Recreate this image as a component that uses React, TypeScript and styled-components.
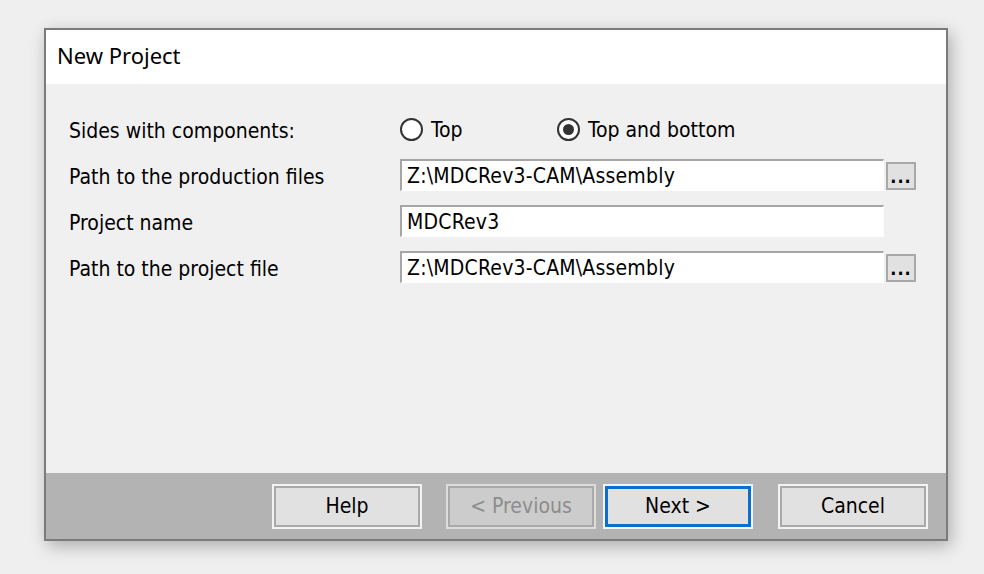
import React from "react";
import styled, { createGlobalStyle } from "styled-components";

const Global = createGlobalStyle`
  html, body { margin: 0; padding: 0; background: #efefef; }
  body { font-family: "DejaVu Sans Condensed", "DejaVu Sans", sans-serif; }
`;

const Page = styled.div`
  width: 984px;
  height: 574px;
  box-sizing: border-box;
  padding: 28px 0 0 44px;
  overflow: hidden;
`;

const Dialog = styled.div`
  width: 904px;
  height: 513px;
  box-sizing: border-box;
  border: 2px solid #7b7b7b;
  background: #f0f0f0;
  display: flex;
  flex-direction: column;
  box-shadow: 3px 5px 16px rgba(0, 0, 0, 0.28);
`;

const TitleBar = styled.div`
  height: 54px;
  flex: none;
  background: #ffffff;
  display: flex;
  align-items: center;
  padding-left: 11px;
  padding-bottom: 5px;
  box-sizing: border-box;
  font-family: "Noto Sans", "Open Sans", sans-serif;
  font-size: 22px;
  color: #000;
`;

const Body = styled.div`
  flex: 1;
  padding: 22px 0 0 23px;
  display: grid;
  grid-template-columns: 331px 484px 2px 30px;
  grid-auto-rows: 46px;
  align-content: start;
  align-items: center;
`;

const Label = styled.div`
  grid-column: 1;
  font-size: 21px;
  color: #000;
  white-space: nowrap;
  padding-top: 3px;
`;

const RadioGroup = styled.div`
  grid-column: 2 / span 3;
  display: flex;
  align-items: center;
`;

const RadioOption = styled.div<{ $width?: number }>`
  display: flex;
  align-items: center;
  gap: 8px;
  width: ${(p) => (p.$width ? `${p.$width}px` : "auto")};
  font-size: 21px;
  color: #000;
  white-space: nowrap;
  padding-top: 2px;
`;

const RadioCircle = styled.span<{ $checked?: boolean }>`
  width: 23px;
  height: 23px;
  box-sizing: border-box;
  border-radius: 50%;
  border: 2px solid #333333;
  background: #ffffff;
  display: flex;
  align-items: center;
  justify-content: center;
  margin-top: -2px;
  &::after {
    content: "";
    display: ${(p) => (p.$checked ? "block" : "none")};
    width: 11px;
    height: 11px;
    border-radius: 50%;
    background: #333333;
  }
`;

const Field = styled.div`
  grid-column: 2;
  height: 32px;
  box-sizing: border-box;
  border-style: solid;
  border-width: 2px 1px 1px 2px;
  border-color: #a6a6a6 #ffffff #ffffff #a6a6a6;
  background: #ffffff;
  padding-left: 5px;
  display: flex;
  align-items: center;
  font-size: 21px;
  color: #000;
  white-space: nowrap;
  letter-spacing: 0.2px;
`;

const BrowseButton = styled.div`
  grid-column: 4;
  width: 30px;
  height: 28px;
  box-sizing: border-box;
  border: 2px solid #a8a8a8;
  background: #e1e1e1;
  display: flex;
  align-items: flex-end;
  justify-content: center;
  font-size: 18px;
  line-height: 1;
  font-weight: bold;
  letter-spacing: 1px;
  color: #000;
  padding-bottom: 2px;
  margin-top: 1px;
`;

const Footer = styled.div`
  height: 66px;
  flex: none;
  background: #b3b3b3;
  display: flex;
  justify-content: flex-end;
  align-items: flex-start;
  padding: 11px 18px 0 0;
  box-sizing: border-box;
`;

const Button = styled.div<{ $space?: number; $variant?: "default" | "disabled" | "focus" }>`
  width: 150px;
  height: 45px;
  box-sizing: border-box;
  margin-left: ${(p) => p.$space ?? 0}px;
  border: 2px solid ${(p) => (p.$variant === "disabled" ? "#dcdcdc" : "#f3f3f3")};
  box-shadow: inset 0 0 0 ${(p) => (p.$variant === "focus" ? "3px #0a6fd1" : "2px #a9a9a9")};
  background: ${(p) => (p.$variant === "disabled" ? "#cccccc" : "#e1e1e1")};
  color: ${(p) => (p.$variant === "disabled" ? "#8c8c8c" : "#000")};
  font-size: 21px;
  display: flex;
  align-items: center;
  justify-content: center;
  padding-bottom: 1px;
  white-space: nowrap;
`;

export default function App() {
  return (
    <Page>
      <Global />
      <Dialog>
        <TitleBar>New Project</TitleBar>
        <Body>
          <Label>Sides with components:</Label>
          <RadioGroup>
            <RadioOption $width={157}>
              <RadioCircle />
              Top
            </RadioOption>
            <RadioOption>
              <RadioCircle $checked />
              Top and bottom
            </RadioOption>
          </RadioGroup>

          <Label>Path to the production files</Label>
          <Field>Z:\MDCRev3-CAM\Assembly</Field>
          <BrowseButton>...</BrowseButton>

          <Label>Project name</Label>
          <Field>MDCRev3</Field>
          <span />
          <span />

          <Label>Path to the project file</Label>
          <Field>Z:\MDCRev3-CAM\Assembly</Field>
          <BrowseButton>...</BrowseButton>
        </Body>
        <Footer>
          <Button>Help</Button>
          <Button $space={24} $variant="disabled">&lt; Previous</Button>
          <Button $space={7} $variant="focus">Next &gt;</Button>
          <Button $space={25}>Cancel</Button>
        </Footer>
      </Dialog>
    </Page>
  );
}
